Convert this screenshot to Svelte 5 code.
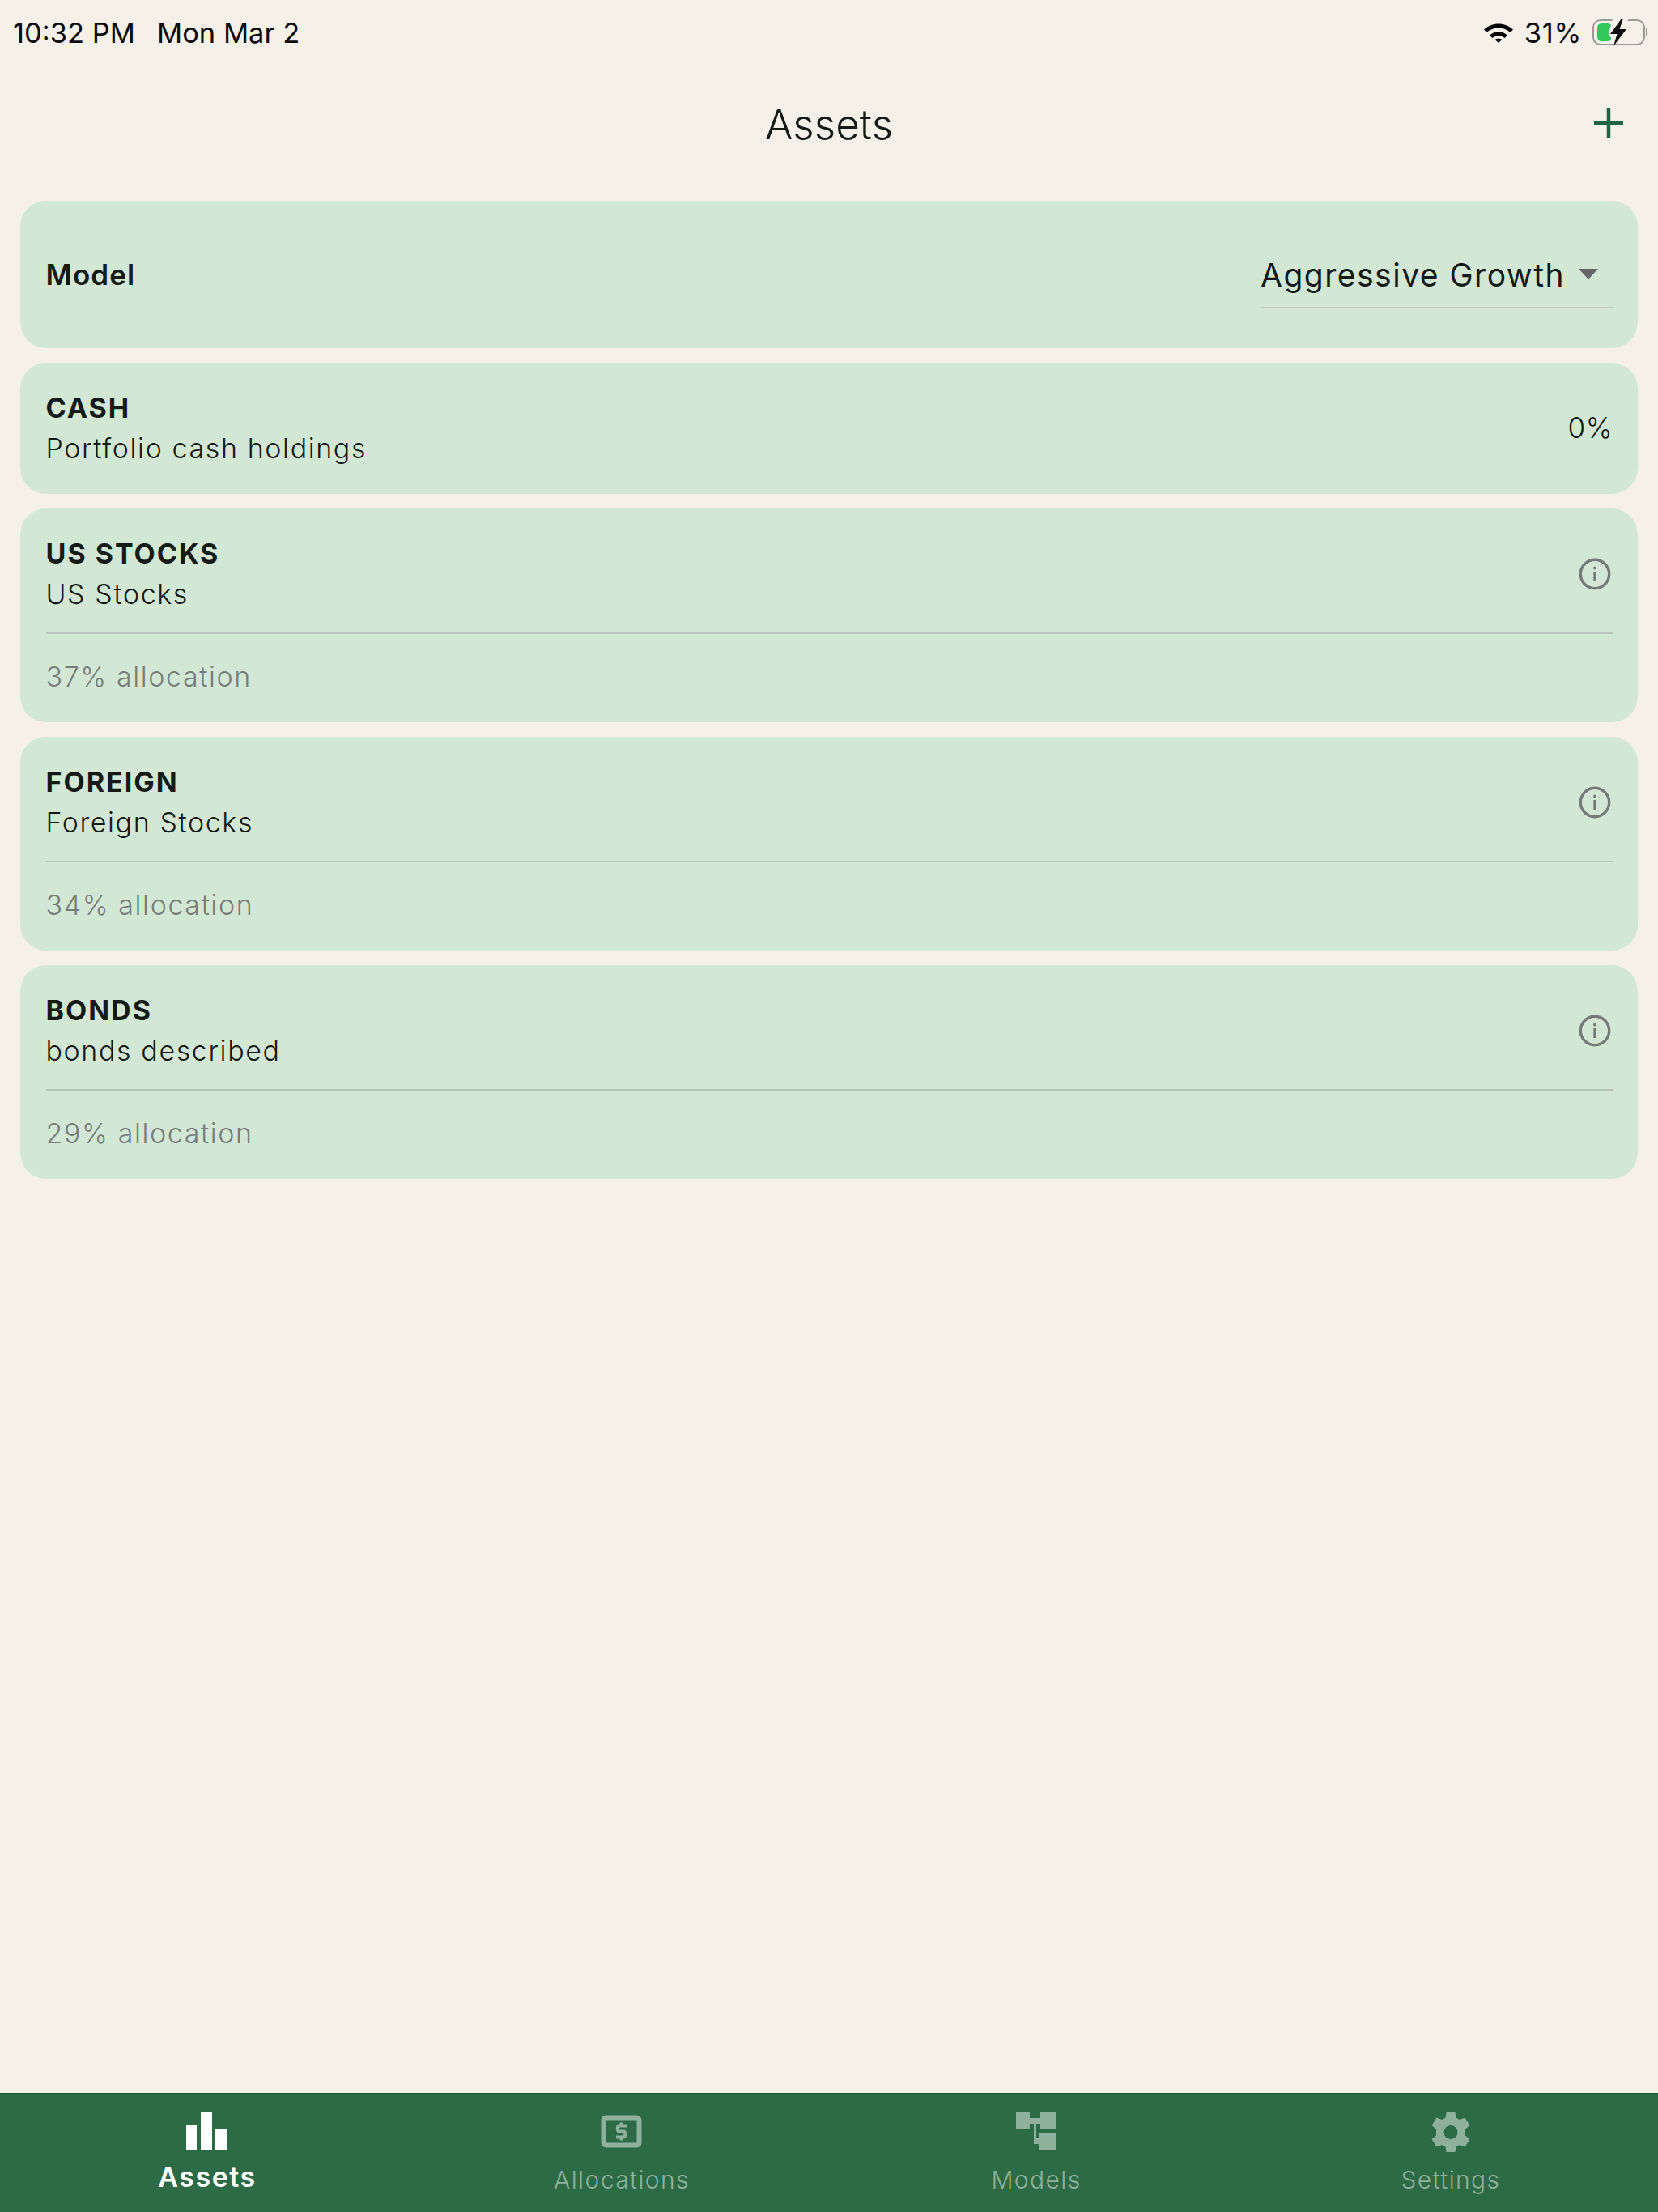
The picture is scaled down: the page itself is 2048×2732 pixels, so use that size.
<script>
  const assets = [
    { code: 'US STOCKS', name: 'US Stocks', pct: 37 },
    { code: 'FOREIGN', name: 'Foreign Stocks', pct: 34 },
    { code: 'BONDS', name: 'bonds described', pct: 29 }
  ];
</script>

<div class="page">
  <div class="status">
    <div class="clock">
      <span class="time">10:32 PM</span>
      <span>Mon Mar 2</span>
    </div>
    <div class="sys">
      <svg class="wifi" width="38" height="26" viewBox="0 0 38 26">
        <path d="M1 9.5 C11 0 27 0 37 9.5 L33.6 13 C25.5 5.6 12.5 5.6 4.4 13 Z" />
        <path d="M8 16.5 C14.5 10.8 23.5 10.8 30 16.5 L26.6 20 C22 16.4 16 16.4 11.4 20 Z" />
        <path d="M14.6 22 C17 20.2 21 20.2 23.4 22 L19 26 Z" />
      </svg>
      <span class="pct">31%</span>
      <svg class="battery" width="70" height="36" viewBox="0 0 70 36">
        <rect x="1" y="3" width="63" height="30" rx="9" fill="none" stroke="#9a9a96" stroke-width="2" />
        <path d="M66 13 C69 14 69 22 66 23 Z" fill="#9a9a96" />
        <path d="M12 7 H19 C24 7 24 11 22 13 C19 15 19 21 22 23 C24 26 23 29 19 29 H12 C8 29 6 27 6 23 V13 C6 9 8 7 12 7 Z" fill="#32c75a" />
        <path d="M25 1 H45 L26 35 L29.5 20 H20 Z" fill="#f5f0e8" />
        <path d="M36 1 L22 20 H30.5 L26 35 L42 14 H33.5 L38 1 Z" fill="#0c0c0c" />
      </svg>
    </div>
  </div>

  <header class="nav">
    <h1>Assets</h1>
    <button class="add" aria-label="Add">
      <svg width="36" height="36" viewBox="0 0 36 36"><path d="M18 0 V36 M0 18 H36" stroke="#1f6640" stroke-width="4.5" /></svg>
    </button>
  </header>

  <main class="list">
    <section class="card model">
      <span class="model-label">Model</span>
      <div class="select">
        <span>Aggressive Growth</span>
        <i class="caret"></i>
      </div>
    </section>

    <section class="card">
      <div class="row">
        <div>
          <div class="code">CASH</div>
          <div class="name">Portfolio cash holdings</div>
        </div>
        <span class="value">0%</span>
      </div>
    </section>

    {#each assets as asset}
      <section class="card">
        <div class="row">
          <div>
            <div class="code">{asset.code}</div>
            <div class="name">{asset.name}</div>
          </div>
          <svg class="info" width="40" height="40" viewBox="0 0 40 40">
            <circle cx="20" cy="20" r="17.7" fill="none" stroke="#777a78" stroke-width="3.4" />
            <circle cx="20" cy="12.5" r="2" fill="#777a78" />
            <rect x="18.3" y="17" width="3.4" height="12" fill="#777a78" />
          </svg>
        </div>
        <div class="divider"></div>
        <div class="alloc">{asset.pct}% allocation</div>
      </section>
    {/each}
  </main>

  <nav class="tabs">
    <div class="tab active">
      <svg width="52" height="50" viewBox="0 0 52 50">
        <path d="M0 15 H13 V47 H0 Z M18 0 H32 V47 H18 Z M36 21 H51 V47 H36 Z" />
      </svg>
      <span>Assets</span>
    </div>
    <div class="tab">
      <svg width="52" height="50" viewBox="0 0 52 50">
        <rect x="3.5" y="6.5" width="44" height="34" rx="3" fill="none" stroke="currentColor" stroke-width="6" />
        <path d="M32 16.5 H23 C20 16.5 20 23.5 23 23.5 H28 C31 23.5 31 30.5 28 30.5 H19" fill="none" stroke="currentColor" stroke-width="4" />
        <path d="M25.5 12.5 V16 M25.5 31 V34.5" stroke="currentColor" stroke-width="4" />
      </svg>
      <span>Allocations</span>
    </div>
    <div class="tab">
      <svg width="52" height="50" viewBox="0 0 52 50">
        <path d="M1 0 H18 V7 H31 V0 H51 V21 H31 V14 H26 V32 H30 V25 H51 V46 H30 V39 H23 V14 H18 V20 H1 Z" />
      </svg>
      <span>Models</span>
    </div>
    <div class="tab">
      <svg width="52" height="50" viewBox="0 0 52 50">
        <path fill-rule="evenodd" d="M20.5 0 H31.5 L32.5 6.5 L37 9 L43.5 6.5 L49.5 16 L44 20.5 V28.5 L49.5 33 L43.5 42.5 L37 40 L32.5 42.5 L31.5 49 H20.5 L19.5 42.5 L15 40 L8.5 42.5 L2.5 33 L8 28.5 V20.5 L2.5 16 L8.5 6.5 L15 9 L19.5 6.5 Z M26 16 A8.5 8.5 0 1 0 26 33 A8.5 8.5 0 1 0 26 16 Z" />
      </svg>
      <span>Settings</span>
    </div>
  </nav>
</div>

<style>
  :global(body) {
    margin: 0;
  }

  .page {
    height: 2732px;
    display: flex;
    flex-direction: column;
    background: #f5f0e8;
    color: #141a16;
    font-family: Inter, "Liberation Sans", sans-serif;
    overflow: hidden;
  }

  .status {
    height: 80px;
    flex: none;
    box-sizing: border-box;
    padding: 0 11px 0 16px;
    display: flex;
    justify-content: space-between;
    align-items: center;
    font-size: 34.5px;
    color: #0c0c0c;
  }

  .clock {
    display: flex;
    gap: 27px;
  }

  .pct {
    letter-spacing: 0.7px;
  }

  .sys {
    display: flex;
    align-items: center;
    gap: 13px;
  }

  .nav {
    height: 150px;
    flex: none;
    box-sizing: border-box;
    padding-bottom: 4px;
    display: flex;
    align-items: center;
    justify-content: center;
    position: relative;
  }

  h1 {
    margin: 0;
    font-size: 51px;
    font-weight: 350;
    line-height: 1;
    letter-spacing: 0.1px;
  }

  .add {
    position: absolute;
    right: 43px;
    top: 54px;
    padding: 0;
    border: 0;
    background: none;
    display: flex;
  }

  .list {
    flex: 1;
    padding: 18px 25px 0;
    display: flex;
    flex-direction: column;
    gap: 18px;
  }

  .card {
    background: #d2e8d4;
    border-radius: 32px;
    padding: 31px 31px 31px 31.5px;
  }

  .model {
    height: 182px;
    box-sizing: border-box;
    padding-top: 0;
    padding-bottom: 0;
    display: flex;
    align-items: center;
    justify-content: space-between;
  }

  .model-label {
    font-size: 35px;
    font-weight: 600;
    letter-spacing: 1.1px;
  }

  .select {
    width: 435px;
    height: 84px;
    box-sizing: border-box;
    padding: 3px 18px 0 0;
    border-bottom: 2px solid #c2cac2;
    display: flex;
    align-items: center;
    justify-content: space-between;
    font-size: 39px;
    letter-spacing: 1.5px;
  }

  .caret {
    width: 0;
    height: 0;
    border-left: 12px solid transparent;
    border-right: 12px solid transparent;
    border-top: 13px solid #666;
    margin-top: -2px;
  }

  .row {
    display: flex;
    align-items: center;
    justify-content: space-between;
  }

  .code {
    font-size: 34px;
    line-height: 50px;
    font-weight: 700;
    letter-spacing: 2px;
  }

  .name,
  .alloc {
    font-size: 34px;
    line-height: 50px;
    font-weight: 350;
    letter-spacing: 1.6px;
  }

  .value {
    font-size: 35px;
    font-weight: 350;
    letter-spacing: 0.5px;
    margin-top: -2px;
  }

  .info {
    margin: 0 2.5px 0 0;
  }

  .divider {
    height: 2px;
    background: #bbc4bb;
    margin-top: 22px;
  }

  .alloc {
    margin-top: 28px;
    color: #777d7a;
  }

  .tabs {
    height: 147px;
    flex: none;
    box-sizing: border-box;
    border-top: 1px solid #1e5c36;
    background: #2d6a46;
    display: grid;
    grid-template-columns: repeat(4, 1fr);
  }

  .tab {
    display: flex;
    flex-direction: column;
    align-items: center;
    padding-top: 23px;
    color: #8fb19c;
    font-size: 30px;
    font-weight: 350;
    letter-spacing: 1.4px;
    line-height: 40px;
  }

  .tab svg {
    fill: currentColor;
    flex: none;
  }

  .tab span {
    margin-top: 13px;
  }

  .tab.active {
    color: #fff;
    font-size: 34px;
    font-weight: 600;
    letter-spacing: 1.5px;
  }

  .tab.active span {
    margin-top: 10px;
  }
</style>
